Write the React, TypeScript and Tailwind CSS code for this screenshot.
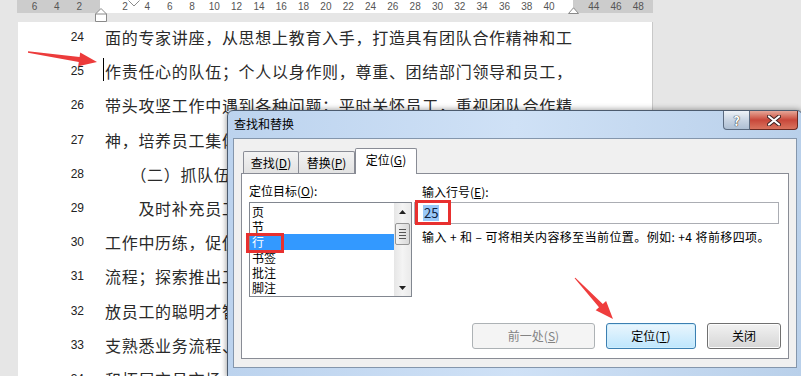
import React from "react";

const rulerNums: number[] = [-6, -4, -2, 2, 4, 6, 8, 10, 12, 14, 16, 18, 20, 22, 24, 26, 28, 30, 32, 34, 36, 38, 40, 44, 46, 48];

const lines: { n: number; t: string; cursor?: boolean }[] = [
  { n: 24, t: "面的专家讲座，从思想上教育入手，打造具有团队合作精神和工" },
  { n: 25, t: "作责任心的队伍；个人以身作则，尊重、团结部门领导和员工，", cursor: true },
  { n: 26, t: "带头攻坚工作中遇到各种问题；平时关怀员工，重视团队合作精" },
  { n: 27, t: "神，培养员工集体荣誉感和团队协作精神。" },
  { n: 28, t: "　　（二）抓队伍建设，提升整体素质。" },
  { n: 29, t: "　　及时补充员工，让新员工在实际" },
  { n: 30, t: "工作中历练，促使其尽快熟悉业务" },
  { n: 31, t: "流程；探索推出工作激励机制，释" },
  { n: 32, t: "放员工的聪明才智，调动积极性；" },
  { n: 33, t: "支熟悉业务流程、懂管理的队伍，" },
  { n: 34, t: "和拓展交员市场，提高工作效率。" },
];

const listItems = ["页", "节", "行", "书签", "批注", "脚注"];

function U({ c }: { c: string }) {
  return <span className="underline underline-offset-[1px]">{c}</span>;
}

export default function App() {
  return (
    <div
      className="relative w-[801px] h-[376px] overflow-hidden bg-[#e6e6e6]"
      style={{ fontFamily: '"Noto Sans CJK SC", "Liberation Sans", sans-serif' }}
    >
      {/* Ruler */}
      <div className="relative flex h-[13px]">
        <div className="w-[17px]" />
        <div className="w-[83px] bg-[#cccccc]" />
        <div className="w-[473px] bg-white" />
        <div className="w-[80px] bg-[#cccccc]" />
        {rulerNums.map((n) => {
          const x = n < 0 ? 101.5 + n * 11.16 : 102.7 + n * 11.16;
          return (
            <span
              key={n}
              className="absolute top-0 -translate-x-1/2 text-[10px] leading-[13px] text-[#555]"
              style={{ left: x, fontFamily: '"Liberation Sans", sans-serif' }}
            >
              {Math.abs(n)}
            </span>
          );
        })}
      </div>
      {/* ruler markers */}
      <svg className="absolute left-[128px] top-0" width="12" height="7">
        <path d="M0.5 0.5 L6 6 L11.5 0.5" fill="#fff" stroke="#8a8a8a" />
      </svg>
      <svg className="absolute left-[95px] top-[8px]" width="12" height="14">
        <path d="M0.5 6 L6 0.5 L11.5 6 V13.5 H0.5 Z" fill="#fff" stroke="#8a8a8a" />
        <path d="M0.5 6 H11.5" stroke="#8a8a8a" />
      </svg>
      <svg className="absolute left-[568px] top-[7px]" width="11" height="7">
        <path d="M0.5 6.5 L5.5 0.8 L10.5 6.5 Z" fill="#fff" stroke="#8a8a8a" />
      </svg>

      {/* Page */}
      <div className="flex mt-[9px]">
        <div className="w-[18px]" />
        <div className="w-[635px] h-[354px] bg-white border-r border-[#c8c8c8] overflow-hidden">
          <div className="flex flex-col -mt-[2px]">
            {lines.map((l) => (
              <div key={l.n} className="flex items-center h-[34.2px] shrink-0">
                <div
                  className="w-[66px] text-right text-[12px] text-[#222]"
                  style={{ fontFamily: '"Liberation Sans", sans-serif' }}
                >
                  {l.n}
                </div>
                {l.cursor ? (
                  <>
                    <span className="ml-[19px] mr-[1px] inline-block w-[1px] h-[23px] bg-black -translate-y-[2px]" />
                    <span className="text-[16px] tracking-[0.7px] whitespace-nowrap text-[#2a2a2a]">{l.t}</span>
                  </>
                ) : (
                  <span className="ml-[21px] text-[16px] tracking-[0.7px] whitespace-nowrap text-[#2a2a2a]">{l.t}</span>
                )}
              </div>
            ))}
          </div>
        </div>
      </div>

      {/* Red arrows */}
      <svg className="absolute left-0 top-0 pointer-events-none z-20" width="801" height="376">
        <polygon
          points="28.07,51.3 79.6,56.9 80.2,52.5 97,62 78.2,66.3 78.8,61.9 27.93,52.7"
          fill="#ec3b3b"
        />
        <polygon
          points="575.4,277.7 602.8,303.9 606.1,300.9 613,319 595.7,310.3 599.0,307.3 574.6,278.3"
          fill="#ef3d3d"
        />
      </svg>

      {/* Dialog */}
      <div className="absolute left-[227px] top-[110px] w-[576px] h-[268px] z-10 rounded-t-[6px] border border-[#4c5b6e] bg-linear-to-r from-[#bcd3ee] via-[#cfe1f6] to-[#b9d0ea] shadow-[0_0_6px_rgba(0,0,0,0.45)] flex flex-col">
        {/* title bar */}
        <div className="flex h-[27px] shrink-0">
          <div className="pl-[6px] pt-[5px] text-[12px] leading-[16px] text-black">查找和替换</div>
          <div className="flex-1" />
          <div className="flex h-[20px] mr-[4px]">
            <div className="w-[27px] h-[19px] flex items-center justify-center rounded-bl-[4px] border border-t-0 border-[#5b6b80] bg-linear-to-b from-[#eef3f8] via-[#c9d5e3] to-[#aebfd3]">
              <span className="text-white font-bold text-[13px] leading-none [text-shadow:0_0_1px_#222,0_0_1px_#222]">?</span>
            </div>
            <div className="w-[48px] h-[19px] flex items-center justify-center rounded-br-[4px] border border-t-0 border-l-0 border-[#6b2a22] bg-linear-to-b from-[#e5a698] via-[#c8473a] to-[#d9735e]">
              <svg width="14" height="11" viewBox="0 0 14 11">
                <path d="M2 1.5 L12 9.5 M12 1.5 L2 9.5" stroke="#3a2020" strokeWidth="4" strokeLinecap="round" />
                <path d="M2 1.5 L12 9.5 M12 1.5 L2 9.5" stroke="#fff" strokeWidth="2.2" strokeLinecap="round" />
              </svg>
            </div>
          </div>
        </div>
        {/* content */}
        <div className="mx-[5px] h-[230px] shrink-0 bg-[#f0f0f0] border border-[#8496ac] pt-[9px] px-[7px] flex flex-col text-[12px] text-black">
          {/* tabs */}
          <div className="flex items-end h-[26px] pl-[2px] -mb-[1px] relative z-10">
            <div className="w-[56px] h-[22px] mb-[1px] flex items-center justify-center border border-b-0 border-[#898c95] rounded-t-[2px] bg-linear-to-b from-[#f3f3f3] to-[#e2e2e2]">
              查找(<U c="D" />)
            </div>
            <div className="w-[56px] h-[22px] mb-[1px] flex items-center justify-center border border-b-0 border-l-0 border-[#898c95] rounded-t-[2px] bg-linear-to-b from-[#f3f3f3] to-[#e2e2e2]">
              替换(<U c="P" />)
            </div>
            <div className="w-[62px] h-[26px] pb-[3px] flex items-center justify-center border border-b-0 border-[#898c95] rounded-t-[2px] bg-white">
              定位(<U c="G" />)
            </div>
          </div>
          {/* panel */}
          <div className="h-[186px] border border-[#898c95] bg-white flex flex-col">
            <div className="flex pl-[7px]">
              {/* left column */}
              <div className="w-[163px] flex flex-col">
                <div className="mt-[9px] h-[16px] leading-[16px]">
                  定位目标(<U c="O" />):
                </div>
                <div className="mt-[3px] h-[95px] border border-[#828790] bg-white flex overflow-hidden">
                  <div className="flex-1 flex flex-col pt-[1px]">
                    {listItems.map((it) => (
                      <div
                        key={it}
                        className={
                          "h-[15.2px] leading-[15px] pl-[2px] overflow-hidden " +
                          (it === "行" ? "bg-[#3399ff] text-white" : "text-black")
                        }
                      >
                        {it}
                      </div>
                    ))}
                  </div>
                  <div className="w-[17px] flex flex-col bg-linear-to-r from-[#e6e6e6] via-[#f4f4f4] to-[#eaeaea]">
                    <div className="h-[17px] flex items-center justify-center">
                      <svg width="7" height="4"><path d="M0 4 L3.5 0 L7 4 Z" fill="#222" /></svg>
                    </div>
                    <div className="mt-[3px] mx-[1px] h-[22px] rounded-[2px] border border-[#959595] bg-linear-to-r from-[#f3f3f3] to-[#d9d9d9] flex flex-col items-center justify-center gap-[2px]">
                      <div className="w-[7px] h-[1px] bg-[#555]" />
                      <div className="w-[7px] h-[1px] bg-[#555]" />
                      <div className="w-[7px] h-[1px] bg-[#555]" />
                      <div className="w-[7px] h-[1px] bg-[#555]" />
                    </div>
                    <div className="flex-1" />
                    <div className="h-[17px] flex items-center justify-center">
                      <svg width="7" height="4"><path d="M0 0 L3.5 4 L7 0 Z" fill="#222" /></svg>
                    </div>
                  </div>
                </div>
              </div>
              {/* right column */}
              <div className="ml-[2px] w-[365px] flex flex-col">
                <div className="mt-[10px] h-[16px] leading-[16px] pl-[8px]">
                  输入行号(<U c="E" />):
                </div>
                <div className="mt-[2px] h-[22px] border border-[#abadb3] bg-white flex items-center pl-[8px]">
                  <span className="bg-[#99c8f8] px-[1px] text-[13px] leading-[16px] text-[#10223f]">25</span>
                </div>
                <div className="mt-[5px] pl-[8px] h-[16px] leading-[16px] whitespace-nowrap tracking-[0.4px]">
                  输入 + 和 – 可将相关内容移至当前位置。例如: +4 将前移四项。
                </div>
              </div>
            </div>
            <div className="flex-1" />
            {/* buttons */}
            <div className="flex justify-end gap-[11px] pr-[7px] pb-[9px]">
              <div className="w-[123px] h-[26px] flex items-center justify-center rounded-[3px] border border-[#adb2b5] bg-[#f4f4f4] text-[#838383]">
                前一处(<U c="S" />)
              </div>
              <div className="w-[90px] h-[26px] flex items-center justify-center rounded-[3px] border border-[#3c7fb1] bg-linear-to-b from-[#eaf6fd] to-[#bee6fd] shadow-[inset_0_0_0_1px_#cfeefd]">
                定位(<U c="T" />)
              </div>
              <div className="w-[74px] h-[26px] flex items-center justify-center rounded-[3px] border border-[#707070] bg-linear-to-b from-[#f2f2f2] to-[#d6d6d6] shadow-[inset_0_0_0_1px_#fcfcfc]">
                关闭
              </div>
            </div>
          </div>
        </div>
      </div>

      {/* red highlight boxes */}
      <div className="absolute left-[246px] top-[233px] w-[38px] h-[20px] border-[3px] border-[#e8302f] z-20" />
      <div className="absolute left-[415px] top-[200px] w-[36px] h-[25px] border-[3px] border-[#e8302f] z-20" />
    </div>
  );
}
